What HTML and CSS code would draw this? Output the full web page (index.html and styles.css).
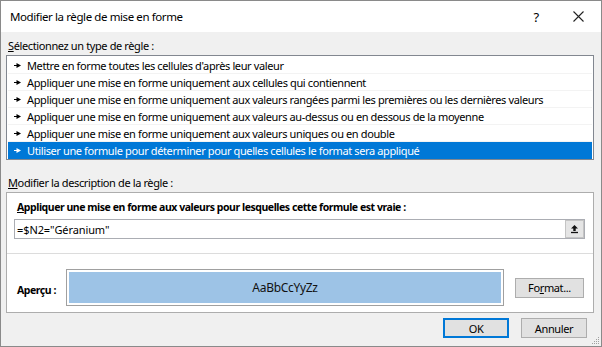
FILE: index.html
```html
<!DOCTYPE html>
<html lang="fr">
<head>
<meta charset="utf-8">
<link rel="stylesheet" href="styles.css">
</head>
<body>
<div class="dialog">
  <div class="titlebar">
    <span class="title">Modifier la règle de mise en forme</span>
    <span class="help">?</span>
    <span class="close"><svg width="11" height="11" viewBox="0 0 11 11"><path d="M0.5 0.5L10.5 10.5M10.5 0.5L0.5 10.5" stroke="#222" stroke-width="1.1" fill="none"/></svg></span>
  </div>
  <div class="content">
    <div class="label label-first"><u>S</u>électionnez un type de règle :</div>
    <div class="list">
      <div class="row"><svg class="arrow" width="7" height="5" viewBox="0 0 7 5"><path d="M0 2.5h3" stroke="currentColor" stroke-width="1"/><path d="M2.5 0L7 2.5L2.5 5Z" fill="currentColor"/></svg>Mettre en forme toutes les cellules d'après leur valeur</div>
      <div class="row"><svg class="arrow" width="7" height="5" viewBox="0 0 7 5"><path d="M0 2.5h3" stroke="currentColor" stroke-width="1"/><path d="M2.5 0L7 2.5L2.5 5Z" fill="currentColor"/></svg>Appliquer une mise en forme uniquement aux cellules qui contiennent</div>
      <div class="row"><svg class="arrow" width="7" height="5" viewBox="0 0 7 5"><path d="M0 2.5h3" stroke="currentColor" stroke-width="1"/><path d="M2.5 0L7 2.5L2.5 5Z" fill="currentColor"/></svg>Appliquer une mise en forme uniquement aux valeurs rangées parmi les premières ou les dernières valeurs</div>
      <div class="row"><svg class="arrow" width="7" height="5" viewBox="0 0 7 5"><path d="M0 2.5h3" stroke="currentColor" stroke-width="1"/><path d="M2.5 0L7 2.5L2.5 5Z" fill="currentColor"/></svg>Appliquer une mise en forme uniquement aux valeurs au-dessus ou en dessous de la moyenne</div>
      <div class="row"><svg class="arrow" width="7" height="5" viewBox="0 0 7 5"><path d="M0 2.5h3" stroke="currentColor" stroke-width="1"/><path d="M2.5 0L7 2.5L2.5 5Z" fill="currentColor"/></svg>Appliquer une mise en forme uniquement aux valeurs uniques ou en double</div>
      <div class="row selected"><svg class="arrow" width="7" height="5" viewBox="0 0 7 5"><path d="M0 2.5h3" stroke="currentColor" stroke-width="1"/><path d="M2.5 0L7 2.5L2.5 5Z" fill="currentColor"/></svg>Utiliser une formule pour déterminer pour quelles cellules le format sera appliqué</div>
    </div>
    <div class="label label-second"><u>M</u>odifier la description de la règle :</div>
    <div class="group">
      <div class="panel-top">
        <div class="bold-label"><u>A</u>ppliquer une mise en forme aux valeurs pour lesquelles cette formule est vraie :</div>
        <div class="input">
          <span class="input-text">=$N2="Géranium"</span>
          <span class="collapse"><svg width="9" height="10" viewBox="0 0 9 10"><path d="M4.5 1L1 4.5h2.3V7h2.4V4.5H8Z" fill="#111"/><path d="M1 8.5h7" stroke="#111" stroke-width="1.3"/></svg></span>
        </div>
      </div>
      <div class="panel-bottom">
        <div class="bold-label preview-label">Aperçu :</div>
        <div class="preview"><div class="preview-fill">AaBbCcYyZz</div></div>
        <div class="btn format">Fo<u>r</u>mat...</div>
      </div>
    </div>
    <div class="buttons">
      <div class="btn dlg default">OK</div>
      <div class="btn dlg">Annuler</div>
    </div>
  </div>
  <svg class="grip" width="8" height="8" viewBox="0 0 8 8"><g fill="#a0a0a0"><rect x="6" y="0" width="1" height="1"/><rect x="4" y="2" width="1" height="1"/><rect x="6" y="2" width="1" height="1"/><rect x="2" y="4" width="1" height="1"/><rect x="4" y="4" width="1" height="1"/><rect x="6" y="4" width="1" height="1"/><rect x="0" y="6" width="1" height="1"/><rect x="2" y="6" width="1" height="1"/><rect x="4" y="6" width="1" height="1"/><rect x="6" y="6" width="1" height="1"/></g></svg>
</div>
</body>
</html>
```
FILE: styles.css
```css
html, body {
  margin: 0;
  padding: 0;
  background: #f0f0f0;
}
.dialog {
  position: relative;
  width: 602px;
  height: 347px;
  box-sizing: border-box;
  border: 1px solid #8a8a8a;
  background: #f0f0f0;
  font-family: "Noto Sans", "Open Sans", sans-serif;
  font-size: 11px;
  letter-spacing: -0.38px;
  color: #000;
  overflow: hidden;
}
.titlebar {
  height: 31px;
  background: #fff;
  display: flex;
  align-items: center;
  padding-left: 9px;
  font-size: 11.5px;
  letter-spacing: -0.4px;
}
.title {
  flex: 1;
  color: #000;
}
.help {
  width: 20px;
  text-align: center;
  margin-right: 27px;
  font-size: 13px;
}
.close {
  display: flex;
  margin-right: 17px;
}
.content {
  padding: 0 7px 0 5px;
}
.label {
  height: 16px;
  line-height: 16px;
  padding-left: 2px;
}
.label-first {
  margin-top: 6px;
  margin-bottom: 1px;
}
.label-second {
  margin-top: 15px;
  margin-bottom: 1px;
}
.list {
  background: #fff;
  border: 1px solid #828790;
  padding: 1px 1px 0 1px;
}
.row {
  height: 17px;
  line-height: 17px;
  display: flex;
  align-items: center;
  padding-left: 6px;
  box-sizing: border-box;
  border-bottom: 1px solid #f3f3f3;
  white-space: nowrap;
}
.row:last-child {
  border-bottom: 0;
}
.arrow {
  margin-right: 6px;
  color: #000;
}
.row.selected {
  background: #0078d7;
  color: #fff;
}
.row.selected .arrow {
  color: #fff;
}
.group {
  background: #fff;
  border: 1px solid #adadad;
}
.panel-top {
  padding: 6px 8px 14px 7px;
  border-bottom: 1px solid #dcdcdc;
}
.bold-label {
  font-weight: bold;
  font-size: 10.5px;
  letter-spacing: -0.45px;
  height: 16px;
  line-height: 16px;
  padding-left: 3px;
}
.input {
  margin-top: 4px;
  height: 20px;
  box-sizing: border-box;
  border: 1px solid #abadb3;
  display: flex;
  align-items: center;
  justify-content: space-between;
}
.input-text {
  padding-left: 2px;
  letter-spacing: -0.1px;
}
.collapse {
  width: 19px;
  height: 18px;
  box-sizing: border-box;
  background: #e5e5e5;
  border: 1px solid #c4c4c4;
  display: flex;
  align-items: center;
  justify-content: center;
}
.panel-bottom {
  padding: 15px 9px 6px 7px;
  display: flex;
  align-items: center;
}
.preview-label {
  width: 52px;
  box-sizing: border-box;
  padding-top: 2px;
}
.preview {
  width: 438px;
  height: 37px;
  box-sizing: border-box;
  border: 1px solid #a0a0a0;
  padding: 2px;
  background: #fff;
}
.preview-fill {
  height: 100%;
  background: #9dc3e6;
  display: flex;
  align-items: center;
  justify-content: center;
  font-size: 12px;
  letter-spacing: -0.3px;
  color: #111;
}
.btn {
  height: 20px;
  box-sizing: border-box;
  background: #e1e1e1;
  border: 1px solid #adadad;
  display: flex;
  align-items: center;
  justify-content: center;
}
.format {
  width: 69px;
  margin-left: auto;
}
.buttons {
  display: flex;
  justify-content: flex-end;
  gap: 12px;
  margin-top: 5px;
  padding-right: 7px;
}
.dlg {
  width: 66px;
}
.dlg.default {
  border: 2px solid #0078d7;
}
.grip {
  position: absolute;
  right: 1px;
  bottom: 1px;
}
```
